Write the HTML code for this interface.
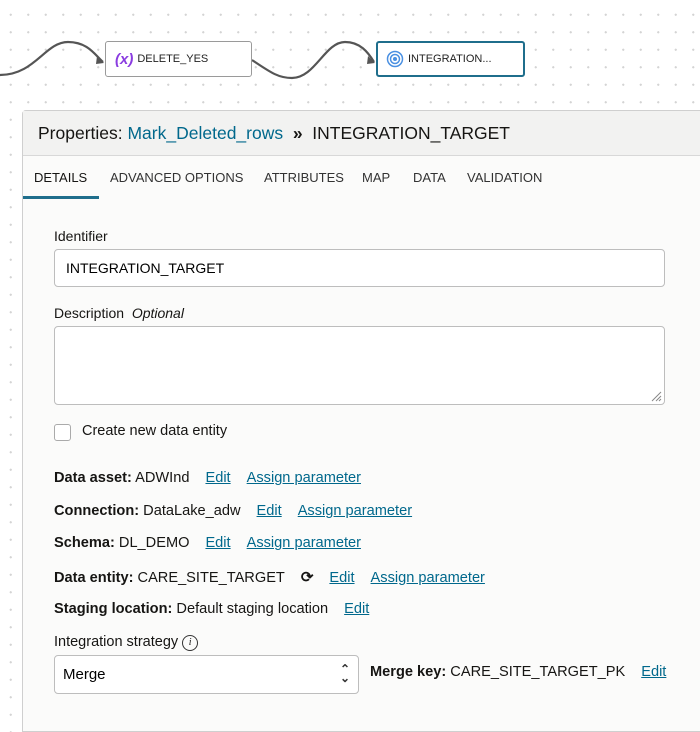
<html><head><style>
body{margin:0;width:700px;height:711px;overflow:hidden;background:#fff;font-family:"Liberation Sans",sans-serif;position:relative;
background-image:radial-gradient(circle,#d4d4d4 1px,transparent 1.2px);background-size:17.5px 17.5px;background-position:2px 6px}
.node{position:absolute;top:41px;height:36px;background:#fff;border:1px solid #9a9a9a;border-radius:3px;font-size:11px;color:#222;display:flex;align-items:center;box-sizing:border-box}
.panel{position:absolute;left:22px;top:110px;width:690px;height:620px;background:#fbfbfa;border:1px solid #cfcfcf;border-radius:4px 0 0 0}
.hdr{height:44px;background:#f2f2f1;border-bottom:1px solid #d8d8d8;font-size:17.5px;color:#161513;line-height:44px;padding-left:15px}
.tabs{height:42px;font-size:13px;color:#333;position:relative}
.tabs span{position:absolute;top:14px}
a{color:#00688c;text-decoration:underline;margin-left:16px}
.t{position:absolute;font-size:14px;color:#161513}
.r{font-size:14.6px}
.b{font-weight:bold}
.inp{position:absolute;left:31px;border:1px solid #bdbdbd;border-radius:4px;background:#fff;box-sizing:border-box}
</style></head><body>
<svg style="position:absolute;left:0;top:0" width="700" height="110">
<path d="M0 75 C35 75 45 42 68 42 C88 42 95 55 103 62" stroke="#555" stroke-width="2.2" fill="none"/>
<path d="M97 56 L104 63 L96 64" fill="#555"/>
<path d="M252 60 C270 72 278 78 292 78 C315 78 325 42 345 42 C360 42 368 52 374 62" stroke="#555" stroke-width="2.2" fill="none"/>
<path d="M368 56 L375 63 L367 64" fill="#555"/>
</svg>
<div class="node" style="left:105px;width:147px"><span style="color:#8a3ce0;font-weight:bold;font-style:italic;font-size:15px;margin:0 4px 0 9px">(x)</span>DELETE_YES</div>
<div class="node" style="left:376px;width:149px;border:2px solid #1f6e8c"><svg width="18" height="18" style="margin:0 4px 0 8px"><circle cx="9" cy="9" r="7.5" fill="none" stroke="#4a90e2" stroke-width="1.5"/><circle cx="9" cy="9" r="4.5" fill="none" stroke="#4a90e2" stroke-width="1.5"/><circle cx="9" cy="9" r="2" fill="#4a90e2"/></svg>INTEGRATION...</div>
<div class="panel">
<div class="hdr">Properties: <span style="color:#00688c">Mark_Deleted_rows</span> &nbsp;<b>»</b>&nbsp; INTEGRATION_TARGET</div>
<div class="tabs"><span style="left:11px;color:#161513">DETAILS</span><span style="left:87px">ADVANCED OPTIONS</span><span style="left:241px">ATTRIBUTES</span><span style="left:339px">MAP</span><span style="left:390px">DATA</span><span style="left:444px">VALIDATION</span>
<div style="position:absolute;left:0;top:40px;width:76px;height:3px;background:#1f6e8c"></div></div>
<div class="t" style="left:31px;top:117px">Identifier</div>
<div class="inp" style="top:138px;width:611px;height:38px;font-size:14px;line-height:36px;padding-left:11px">INTEGRATION_TARGET</div>
<div class="t" style="left:31px;top:194px">Description&nbsp; <i>Optional</i></div>
<div class="inp" style="top:215px;width:611px;height:79px"><svg style="position:absolute;right:2px;bottom:2px" width="12" height="12"><path d="M11 2L2 11M11 6L6 11M11 9L9 11" stroke="#888"/></svg></div>
<div class="inp" style="top:313px;width:17px;height:17px;border-radius:3px;border-color:#aaa"></div>
<div class="t" style="left:59px;top:312px;font-size:14.5px">Create new data entity</div>
<div class="t r" style="left:31px;top:359px"><span class="b">Data asset:</span> ADWInd<a>Edit</a><a>Assign parameter</a></div>
<div class="t r" style="left:31px;top:392px"><span class="b">Connection:</span> DataLake_adw<a>Edit</a><a>Assign parameter</a></div>
<div class="t r" style="left:31px;top:424px"><span class="b">Schema:</span> DL_DEMO<a>Edit</a><a>Assign parameter</a></div>
<div class="t r" style="left:31px;top:457px"><span class="b">Data entity:</span> CARE_SITE_TARGET &nbsp;&nbsp;&nbsp;<b style="font-size:15px">⟳</b><a>Edit</a><a>Assign parameter</a></div>
<div class="t r" style="left:31px;top:490px"><span class="b">Staging location:</span> Default staging location<a>Edit</a></div>
<div class="t" style="left:31px;top:523px;font-size:14.5px">Integration strategy <span style="display:inline-block;width:14px;height:14px;border:1px solid #333;border-radius:50%;font-size:10px;text-align:center;line-height:14px;font-style:italic;font-family:'Liberation Serif',serif;vertical-align:1px">i</span></div>
<div class="inp" style="top:544px;width:305px;height:39px;font-size:15px;line-height:37px;padding-left:8px">Merge<span style="position:absolute;right:8px;top:-1px;font-size:12px;font-weight:bold;line-height:9px;padding-top:10px;color:#333">⌃<br>⌄</span></div>
<div class="t r" style="left:347px;top:553px"><span class="b">Merge key:</span> CARE_SITE_TARGET_PK<a>Edit</a></div>
</div>
</body></html>
